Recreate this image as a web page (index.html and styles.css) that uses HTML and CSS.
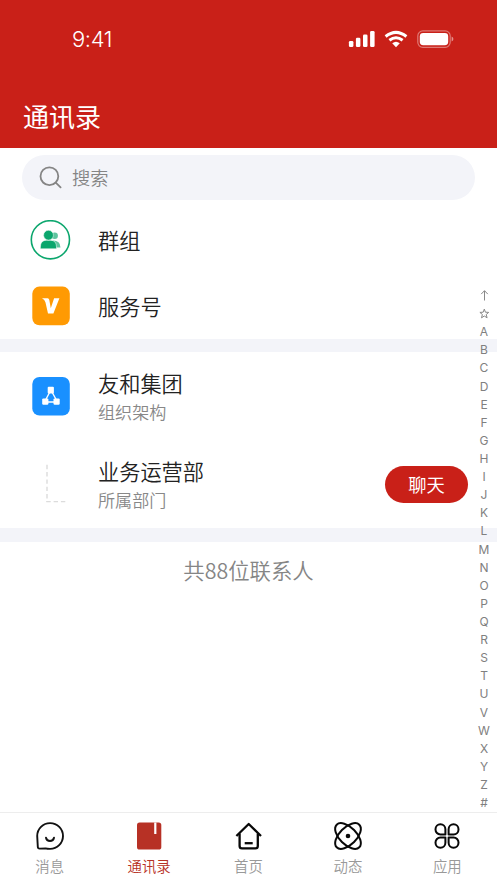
FILE: index.html
```html
<!DOCTYPE html>
<html lang="zh-CN">
<head>
<meta charset="utf-8">
<meta name="viewport" content="width=device-width, initial-scale=1">
<title>通讯录</title>
<link rel="stylesheet" href="styles.css">
</head>
<body>
<div class="app">
  <header class="header">
    <div class="status">
      <span class="time">9:41</span>
      <div class="status-icons">
        <svg width="27" height="18" viewBox="0 0 27 18" fill="#fff"><rect x="0.9" y="11" width="4.5" height="6" rx="1.3"/><rect x="7.9" y="7.8" width="4.5" height="9.2" rx="1.3"/><rect x="15" y="4.4" width="4.5" height="12.6" rx="1.3"/><rect x="22.1" y="1" width="4.5" height="16" rx="1.3"/></svg>
        <svg width="24" height="18" viewBox="0 0 24 18" fill="none" stroke="#fff" stroke-width="3"><path d="M1.6 6.5Q12-1.8 22.4 6.5"/><path d="M5.4 10.3Q12 5.2 18.6 10.3"/><path d="M8.2 13.3Q12 10.2 15.8 13.3L12 17.2Z" fill="#fff" stroke="none"/></svg>
        <svg width="37" height="18" viewBox="0 0 37 18"><rect x="0.8" y="0.9" width="32.4" height="16.4" rx="5" fill="none" stroke="#fff" stroke-opacity=".4" stroke-width="1.2"/><rect x="2.8" y="3" width="28.4" height="12.2" rx="3.4" fill="#fff"/><path d="M34.6 6.4Q36.4 7.2 36.4 9T34.6 11.6Z" fill="#fff" fill-opacity=".5"/></svg>
      </div>
    </div>
    <h1 class="title">通讯录</h1>
  </header>

  <main class="content">
    <div class="search">
      <svg width="24" height="24" viewBox="0 0 24 24" fill="none" stroke="#858585" stroke-width="1.8" stroke-linecap="round"><circle cx="10.4" cy="10.2" r="8.9"/><path d="M17 16.8L21.6 21.4"/></svg>
      <span>搜索</span>
    </div>

    <section class="group">
      <div class="row row-simple">
        <svg class="row-icon" width="41" height="40" viewBox="0 0 41 40"><circle cx="20.4" cy="19.8" r="19.1" fill="#fff" stroke="#0ba66d" stroke-width="1.6"/><g fill="#0ba66d"><g opacity=".65"><circle cx="24.7" cy="15.8" r="3.2"/><path d="M23 20.5Q30.3 20.5 30.5 27.4H23Z"/></g><path d="M10.4 28.8V27Q10.4 20.2 16.7 20.2H20.2Q26.5 20.2 26.5 27V28.8Z" stroke="#fff" stroke-width=".5"/><circle cx="18.5" cy="15.2" r="4.9" stroke="#fff" stroke-width=".5"/></g></svg>
        <span class="name">群组</span>
      </div>
      <div class="row row-simple">
        <svg class="row-icon" width="41" height="40" viewBox="0 0 41 40"><rect x="2.3" y=".6" width="37.5" height="38.7" rx="7.2" fill="#ff9a03"/><path d="M12 12.3H17.6Q19 12.3 19.3 14L20.8 22.2L24.1 12.3H29.4L23.4 27.6H18L15.5 16.4Q14.8 13.6 12 12.3Z" fill="#fff"/></svg>
        <span class="name">服务号</span>
      </div>
    </section>

    <section class="group group-org">
      <div class="row row-detail">
        <svg class="row-icon" width="41" height="40" viewBox="0 0 41 40"><rect x="2.3" y=".9" width="37.5" height="38.7" rx="7.2" fill="#1990ff"/><path d="M19.8 16L15.6 24M22 16L26.4 24M15 26H27" stroke="#fff" stroke-width="1.4"/><g fill="#fff"><rect x="17.7" y="10.8" width="6.2" height="6.7" rx="1"/><rect x="12.2" y="22.4" width="6.2" height="6.4" rx="1.2"/><rect x="23.5" y="22.4" width="6.2" height="6.4" rx="1.2"/></g></svg>
        <div class="text"><span class="name">友和集团</span><span class="sub">组织架构</span></div>
      </div>
      <div class="row row-detail">
        <svg class="row-icon" width="41" height="40" viewBox="0 0 41 40" fill="none" stroke="#dcdcdc" stroke-width="1.4" stroke-dasharray="4.4 2.9"><path d="M17 .8V38"/><path d="M16.3 37.6H37.5"/></svg>
        <div class="text"><span class="name">业务运营部</span><span class="sub">所属部门</span></div>
        <button class="chat">聊天</button>
      </div>
    </section>

    <p class="total">共88位联系人</p>
  </main>

  <nav class="index">
    <svg width="12" height="18" viewBox="0 0 12 18" fill="none" stroke="#888" stroke-width="1"><path d="M6.5 13.5V3.8M3.2 7.1L6.5 3.7L9.8 7.1"/></svg>
    <svg width="12" height="18" viewBox="0 0 12 18" fill="none" stroke="#888" stroke-width="1" stroke-linejoin="round"><path d="M6.3 4.1L7.4 7.2L10.7 7.4L8.2 9.5L9.1 12.8L6.3 11L3.5 12.8L4.4 9.5L1.9 7.4L5.2 7.2Z"/></svg>
    <span>A</span><span>B</span><span>C</span><span>D</span><span>E</span><span>F</span><span>G</span><span>H</span><span>I</span><span>J</span><span>K</span><span>L</span><span>M</span><span>N</span><span>O</span><span>P</span><span>Q</span><span>R</span><span>S</span><span>T</span><span>U</span><span>V</span><span>W</span><span>X</span><span>Y</span><span>Z</span><span>#</span>
  </nav>

  <footer class="tabs">
    <div class="tab">
      <svg width="30" height="30" viewBox="0 0 30 30" fill="none" stroke="#111" stroke-width="1.9" stroke-linecap="round" stroke-linejoin="round"><path d="M2.2 15A12.9 12.9 0 1 1 15 27.9Q12 27.9 10.5 27.4L4.8 27.6Q2.9 27.7 2.8 25.8Z"/><path d="M11 16.8Q11.6 20 15 20T19 16.8"/></svg>
      <span>消息</span>
    </div>
    <div class="tab active">
      <svg width="30" height="30" viewBox="0 0 30 30"><rect x="3" y="1.5" width="24.3" height="27" rx="2.6" fill="#b73125"/><path d="M21.3 1.5V13" stroke="#fff" stroke-width="2.2"/></svg>
      <span>通讯录</span>
    </div>
    <div class="tab">
      <svg width="30" height="30" viewBox="0 0 30 30" fill="none" stroke="#080808" stroke-width="2.3" stroke-linejoin="round"><path d="M2.4 15L14.7 3L27 15"/><path d="M5.6 12.5V25Q5.6 27.4 8 27.4H21.4Q23.8 27.4 23.8 25V12.5"/><path d="M10.7 22.2H18.7"/></svg>
      <span>首页</span>
    </div>
    <div class="tab">
      <svg width="30" height="30" viewBox="0 0 30 30" fill="none" stroke="#080808" stroke-width="2"><ellipse cx="15" cy="15" rx="16" ry="8.6" transform="rotate(45 15 15)"/><ellipse cx="15" cy="15" rx="16" ry="8.6" transform="rotate(-45 15 15)"/><circle cx="15" cy="15" r="2.3" fill="#080808" stroke="none"/></svg>
      <span>动态</span>
    </div>
    <div class="tab">
      <svg width="30" height="30" viewBox="0 0 30 30" fill="none" stroke="#080808" stroke-width="2" stroke-linejoin="round"><path d="M13.4 13.4H8.4A4.9 4.9 0 0 1 3.5 8.5V8.2A4.95 4.95 0 0 1 13.4 8.2Z"/><path d="M16.6 13.4H21.6A4.9 4.9 0 0 0 26.5 8.5V8.2A4.95 4.95 0 0 0 16.6 8.2Z"/><path d="M13.4 16.6H8.4A4.9 4.9 0 0 0 3.5 21.5V21.8A4.95 4.95 0 0 0 13.4 21.8Z"/><path d="M16.6 16.6H21.6A4.9 4.9 0 0 1 26.5 21.5V21.8A4.95 4.95 0 0 1 16.6 21.8Z"/></svg>
      <span>应用</span>
    </div>
  </footer>
</div>
</body>
</html>
```
FILE: styles.css
```css
* { box-sizing: border-box; }

body {
  margin: 0;
  background: #fff;
  font-family: "Noto Sans CJK SC", sans-serif;
  font-weight: 350;
  color: #222;
}

svg { display: block; flex: none; }

.app {
  position: relative;
  height: 883px;
  display: flex;
  flex-direction: column;
  overflow: hidden;
}

.header {
  height: 148px;
  background: #c92018;
  color: #fff;
}

.status {
  display: flex;
  justify-content: space-between;
  align-items: center;
  height: 78px;
  padding: 0 43px 0 72px;
}

.time {
  font: 350 22px/30px Inter, sans-serif;
  letter-spacing: -0.4px;
}

.status-icons {
  display: flex;
  align-items: center;
  gap: 9px;
}

.title {
  margin: 18px 0 0 23px;
  font-size: 26px;
  font-weight: 400;
  line-height: 40px;
}

.content { flex: 1; }

.search {
  display: flex;
  align-items: center;
  gap: 9px;
  height: 45px;
  margin: 7px 22px;
  padding-left: 17px;
  border-radius: 23px;
  background: #f3f4f9;
  color: #858585;
  font-size: 18.2px;
  line-height: 28px;
}

.search span { margin-top: -1px; }

.group { border-bottom: 13px solid #f3f4f9; }

.row {
  display: flex;
  align-items: center;
  padding: 0 30px;
}

.row-icon { margin-right: 27px; }

.row-simple { height: 66px; }

.row-detail { height: 88px; }

.group-org { height: 190px; border-bottom-width: 14px; }

.text {
  display: flex;
  flex-direction: column;
  padding-top: 2px;
}

.name {
  font-size: 21.2px;
  line-height: 30px;
}

.sub {
  color: #888;
  font-size: 17.1px;
  line-height: 28px;
}

.chat {
  width: 83px;
  height: 37px;
  margin-left: auto;
  padding: 0;
  border: 0;
  border-radius: 19px;
  background: #c92018;
  color: #fff;
  font: 18.3px/36px "Noto Sans CJK SC", sans-serif;
}

.row-detail:has(.chat) { padding-right: 29px; }

.total {
  margin: 12px 0 0;
  color: #858585;
  font-size: 21.4px;
  line-height: 32px;
  text-align: center;
}

.index {
  position: absolute;
  top: 287px;
  right: 3px;
  width: 20px;
  display: grid;
  grid-auto-rows: 18.12px;
  justify-items: center;
  color: #808080;
  font: 400 12px/18px Inter, sans-serif;
}

.tabs {
  display: flex;
  height: 71px;
  border-top: 1px solid #ededed;
}

.tab {
  flex: 1;
  display: flex;
  flex-direction: column;
  align-items: center;
  gap: 5px;
  padding-top: 8px;
  color: #999;
  font-size: 14.4px;
  line-height: 20px;
}

.active { color: #b73125; }
```
